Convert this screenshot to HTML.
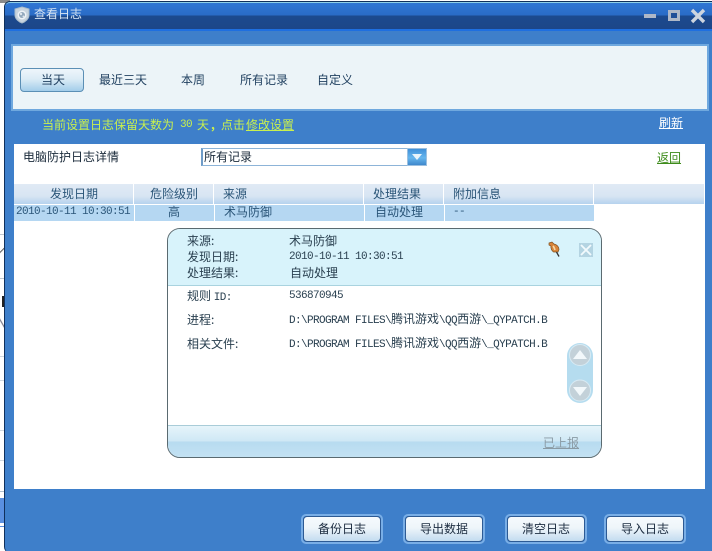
<!DOCTYPE html>
<html><head><meta charset="utf-8"><style>
html,body{margin:0;padding:0;background:#fff}
#p{position:relative;width:712px;height:551px;overflow:hidden;background:#fff;font:12px/16px "WenQuanYi Zen Hei","Noto Sans CJK SC","Liberation Sans",sans-serif;color:#1f3f5f}
#p div,#p span.t,#p svg{position:absolute}
.t{position:absolute;white-space:nowrap;line-height:16px}
.m{font-family:"Liberation Mono","DejaVu Sans Mono","WenQuanYi Zen Hei",monospace;font-size:11px;letter-spacing:-.6px}
.m span{letter-spacing:0;font-size:12px}
.d{color:#2a4050}
.u{color:#2a5578}
.btn{width:78px;height:26px;border:2px solid #79aee6;border-radius:5px;box-sizing:content-box}
.btn i{position:absolute;left:0;top:0;width:76px;height:24px;border:1px solid #2c5a94;border-radius:4px;background:linear-gradient(#f6fafd,#eef5fa 45%,#c3dcf0);display:block}
.btn b{position:absolute;left:0;width:78px;top:5px;text-align:center;font-weight:normal;color:#1c2c40;line-height:16px}
</style></head><body><div id="p">
<!-- stray background at left -->
<div style="left:0;top:0;width:10px;height:3px;background:#8a8a8a"></div>
<div style="left:0;top:234px;width:5px;height:1px;background:#c0c8d0"></div>
<div style="left:0;top:245px;width:5px;height:11px;background:linear-gradient(135deg,#fff 40%,#333 45%,#fff 55%)"></div>
<div style="left:0;top:278px;width:5px;height:1px;background:#c0c8d0"></div>
<div style="left:2px;top:296px;width:2px;height:11px;background:#222"></div>
<div style="left:0;top:318px;width:5px;height:12px;background:linear-gradient(60deg,#fff 40%,#667 50%,#fff 60%)"></div>
<div style="left:0;top:356px;width:5px;height:1px;background:#d0d8e0"></div>
<div style="left:0;top:380px;width:5px;height:1px;background:#d0d8e0"></div>
<div style="left:0;top:430px;width:5px;height:1px;background:#d0d8e0"></div>
<div style="left:0;top:460px;width:5px;height:1px;background:#d0d8e0"></div>
<div style="left:0;top:491px;width:5px;height:1px;background:#b0c0d0"></div>
<div style="left:0;top:498px;width:5px;height:26px;background:#5a90e0"></div>
<div style="left:0;top:523px;width:5px;height:2px;background:#fff"></div>
<div style="left:0;top:526px;width:5px;height:1px;background:#5a90e0"></div>

<!-- window -->
<div style="left:4px;top:1px;width:710px;height:552px;background:#3e7fca;border:1px solid #10305c;border-width:1px 0 0 1px;border-top-left-radius:6px;border-bottom-left-radius:6px;box-sizing:border-box"></div>
<div style="left:5px;top:2px;width:707px;height:28px;background:linear-gradient(#2f76d4 0,#2a6cc6 12px,#1c4a8e 13px,#1c4688 27px);border-top:1px solid #8fd0e8;box-sizing:border-box;border-top-left-radius:5px"></div>
<div style="left:5px;top:29px;width:707px;height:2px;background:#1e6fe0"></div>

<svg style="left:14px;top:6px" width="16" height="18" viewBox="0 0 16 18"><path d="M8 1 L15 3 V9 C15 13 11 16 8 17 C5 16 1 13 1 9 V3Z" fill="#c8d4de" stroke="#a9bccb"/><circle cx="8" cy="9" r="4.5" fill="#eef3f7"/><circle cx="8" cy="9" r="3" fill="#93a9bd"/><circle cx="7" cy="8" r="1.200" fill="#dfe7ee"/><circle cx="9.500" cy="10.500" r="1" fill="#dfe7ee"/></svg>
<span class="t" style="left:34px;top:6px;color:#d8e6f4">查看日志</span>

<div style="left:644px;top:14px;width:12px;height:4px;background:#aeb8c8"></div>
<div style="left:668px;top:10px;width:12px;height:11px;box-sizing:border-box;border:3px solid #aeb8c8;background:#1f4f98"></div>
<svg style="left:690px;top:8px" width="16" height="16" viewBox="0 0 16 16"><path d="M2 2 L14 14 M14 2 L2 14" stroke="#cdd5df" stroke-width="3.4"/></svg>

<!-- tab panel -->
<div style="left:11px;top:44px;width:698px;height:67px;box-sizing:border-box;border:2px solid #6fa8de;background:#ecf4f8"></div>
<div style="left:20px;top:68px;width:64px;height:24px;box-sizing:border-box;border:1px solid #5b8fb5;border-radius:4px;background:linear-gradient(#eef6fb,#dcecf6 45%,#a3cdea)"></div>
<span class="t" style="left:41px;top:72px">当天</span>
<span class="t" style="left:99px;top:72px">最近三天</span>
<span class="t" style="left:181px;top:72px">本周</span>
<span class="t" style="left:240px;top:72px">所有记录</span>
<span class="t" style="left:317px;top:72px">自定义</span>

<span class="t" style="left:42px;top:117px;color:#c9f04e">当前设置日志保留天数为</span>
<span class="t m" style="left:180px;top:117px;color:#c9f04e">30</span>
<span class="t" style="left:197px;top:117px;color:#c9f04e">天</span>
<span class="t" style="left:211px;top:117px;color:#c9f04e;font-weight:bold">,</span>
<span class="t" style="left:221px;top:117px;color:#c9f04e">点击</span>
<span class="t" style="left:246px;top:117px;color:#c9f04e;text-decoration:underline">修改设置</span>
<span class="t" style="left:659px;top:115px;color:#fff;text-decoration:underline">刷新</span>

<!-- main -->
<div style="left:14px;top:144px;width:691px;height:345px;background:#fff"></div>
<span class="t" style="left:23px;top:149px;color:#1a2a3a">电脑防护日志详情</span>
<div style="left:201px;top:148px;width:226px;height:18px;box-sizing:border-box;border:1px solid #8db4d8;border-left:2px solid #6f9cc8;background:#fff"></div>
<span class="t" style="left:204px;top:149px;color:#1a2a3a">所有记录</span>
<div style="left:407px;top:148px;width:20px;height:18px;background:linear-gradient(#3f8fd8,#66b6ee 55%,#3f88cc);border:1px solid #9cc0e0;box-sizing:border-box"></div>
<svg style="left:411px;top:154px" width="12" height="7" viewBox="0 0 12 7"><path d="M1 0 H11 L6 6Z" fill="#e8f4fb"/></svg>
<span class="t" style="left:657px;top:150px;color:#3d8b1a;text-decoration:underline">返回</span>

<!-- table header -->
<div style="left:14px;top:184px;width:690px;height:20px;background:linear-gradient(#e0eaf5,#d8e5f3 60%,#b6d2ee)"></div>
<div style="left:133px;top:184px;width:1px;height:20px;background:#fff"></div>
<div style="left:213px;top:184px;width:1px;height:20px;background:#fff"></div>
<div style="left:363px;top:184px;width:1px;height:20px;background:#fff"></div>
<div style="left:443px;top:184px;width:1px;height:20px;background:#fff"></div>
<div style="left:593px;top:184px;width:1px;height:20px;background:#fff"></div>
<span class="t u" style="left:50px;top:186px">发现日期</span>
<span class="t u" style="left:150px;top:186px">危险级别</span>
<span class="t u" style="left:223px;top:186px">来源</span>
<span class="t u" style="left:373px;top:186px">处理结果</span>
<span class="t u" style="left:453px;top:186px">附加信息</span>

<!-- row -->
<div style="left:14px;top:205px;width:580px;height:16px;background:#b5d7f2"></div>
<div style="left:134px;top:205px;width:1px;height:16px;background:#fff"></div>
<div style="left:214px;top:205px;width:1px;height:16px;background:#fff"></div>
<div style="left:364px;top:205px;width:1px;height:16px;background:#fff"></div>
<div style="left:444px;top:205px;width:1px;height:16px;background:#fff"></div>
<span class="t m u" style="left:16px;top:204px">2010-10-11 10:30:51</span>
<span class="t u" style="left:168px;top:204px">高</span>
<span class="t u" style="left:224px;top:204px">术马防御</span>
<span class="t u" style="left:375px;top:204px">自动处理</span>
<span class="t m u" style="left:453px;top:204px">--</span>

<!-- popup -->
<div style="left:167px;top:228px;width:435px;height:230px;box-sizing:border-box;border:1px solid #5a6a70;border-radius:13px;background:#fff;overflow:hidden">
  <div style="left:0;top:0;width:433px;height:56px;background:#d8f3fb;border-bottom:1px solid #a9d3df"></div>
  <div style="left:0;top:196px;width:433px;height:32px;border-top:1px solid #a9ccd8;background:linear-gradient(#e6f4fa,#cfe8f5 15px,#b7dbf0 16px,#c4e2f3)"></div>
</div>
<span class="t d" style="left:187px;top:233px">来源:</span>
<span class="t d" style="left:289px;top:233px">术马防御</span>
<span class="t d" style="left:187px;top:249px">发现日期:</span>
<span class="t m d" style="left:289px;top:249px">2010-10-11 10:30:51</span>
<span class="t d" style="left:187px;top:265px">处理结果:</span>
<span class="t d" style="left:290px;top:265px">自动处理</span>

<svg style="left:547px;top:241px" width="15" height="17" viewBox="0 0 15 17"><path d="M2 2 L5 1 L7 3 C10 3.500 12 6 12 8.500 L11 11 L6.500 11 C4.500 9.500 3.500 7 4 5 L2 4Z" fill="#d9853a" stroke="#7f5222" stroke-width=".7"/><path d="M9.500 11 L12 15.500" stroke="#333" stroke-width="1.3"/><path d="M6 5 C7 6 7.500 7.500 8 9" stroke="#f6d9a8" stroke-width="1.6" fill="none"/></svg>
<div style="left:579px;top:243px;width:14px;height:14px;background:#b4d4e2"></div>
<svg style="left:579px;top:243px" width="14" height="14" viewBox="0 0 14 14"><path d="M2 2 L12 12 M12 2 L2 12" stroke="#f2fafd" stroke-width="1.8"/></svg>

<span class="t d" style="left:187px;top:288px">规则 <span class="m" style="position:static">ID:</span></span>
<span class="t m d" style="left:289px;top:288px">536870945</span>
<span class="t d" style="left:187px;top:312px">进程:</span>
<span class="t m d" style="left:289px;top:312px">D:\PROGRAM FILES\<span>腾讯游戏</span>\QQ<span>西游</span>\_QYPATCH.B</span>
<span class="t d" style="left:187px;top:336px">相关文件:</span>
<span class="t m d" style="left:289px;top:336px">D:\PROGRAM FILES\<span>腾讯游戏</span>\QQ<span>西游</span>\_QYPATCH.B</span>

<svg style="left:567px;top:343px" width="26" height="60" viewBox="0 0 26 60"><rect width="26" height="60" rx="13" fill="#b5dcef"/><circle cx="13" cy="12" r="10.5" fill="#c3d1d9" stroke="#d8eaf3"/><path d="M6 16 L13 7 L20 16Z" fill="#f2f8fb"/><circle cx="13" cy="47.500" r="10.5" fill="#c3d1d9" stroke="#d8eaf3"/><path d="M6 44 L20 44 L13 53Z" fill="#f2f8fb"/></svg>

<span class="t" style="left:543px;top:435px;color:#8a9aa4;text-decoration:underline">已上报</span>

<!-- bottom buttons -->
<div class="btn" style="left:301px;top:514px"><i></i><b>备份日志</b></div>
<div class="btn" style="left:403px;top:514px"><i></i><b>导出数据</b></div>
<div class="btn" style="left:505px;top:514px"><i></i><b>清空日志</b></div>
<div class="btn" style="left:604px;top:514px"><i></i><b>导入日志</b></div>
</div></body></html>
